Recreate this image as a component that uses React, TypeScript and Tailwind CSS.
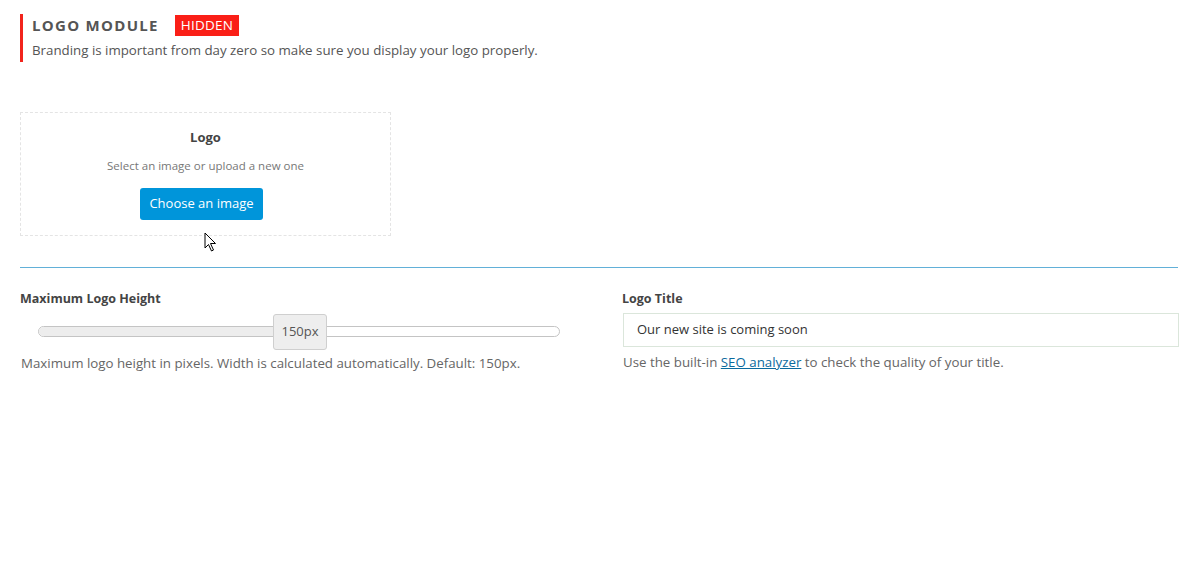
import React from "react";

const font = { fontFamily: '"Open Sans", "Noto Sans", Arial, sans-serif' };

const Cursor = () => (
  <svg width="14" height="22" viewBox="0 0 14 22" className="absolute left-[204px] top-[232px]">
    <path d="M1 1 L1 16 L4.5 12.5 L7.5 19 L9.5 18 L6.5 11.5 L11.5 11.5 Z" fill="#fff" stroke="#000" strokeWidth="1" strokeLinejoin="round" />
  </svg>
);

const App = () => {
  return (
    <div className="relative w-[1188px] h-[570px] bg-white text-[#555] overflow-hidden" style={font}>
      <div className="pl-5 pt-[14px]">
        <div className="border-l-[3px] border-[#f2241c] pl-[9px] h-[48px]">
          <div className="flex items-center gap-[16px] h-[22px]">
            <h2 className="text-[15px] font-bold tracking-[1.3px] text-[#555] leading-none">LOGO MODULE</h2>
            <span className="bg-[#fa1f17] text-white text-[13.5px] leading-[21px] px-[6px] tracking-[0.2px]">HIDDEN</span>
          </div>
          <p className="text-[13.3px] mt-[4px] text-[#555] leading-[20px]">
            Branding is important from day zero so make sure you display your logo properly.
          </p>
        </div>
      </div>

      <div className="ml-5 mt-[50px] w-[371px] h-[124px] border border-dashed border-[#e4e4e4] flex flex-col items-center pt-[15px]">
        <div className="text-[13px] font-bold text-[#444]">Logo</div>
        <div className="text-[11.5px] text-[#777] mt-[9px]">Select an image or upload a new one</div>
        <button className="mt-[14px] mr-[8px] w-[123px] h-[32px] bg-[#0095da] text-white text-[13px] rounded-[3px]">
          Choose an image
        </button>
      </div>
      <Cursor />

      <div className="ml-5 mr-[10px] mt-[31px] h-px bg-[#62b0d8]" />

      <div className="flex ml-5 mr-[9px] mt-[22px]">
        <div className="w-[540px] shrink-0">
          <div className="text-[12.5px] font-bold text-[#444]">Maximum Logo Height</div>
          <div className="relative mt-[5px] ml-[18px] h-[36px] flex items-center">
            <div className="w-full h-[11px] rounded-full border border-[#c4c4c4] bg-white overflow-hidden">
              <div className="w-[240px] h-full bg-[#ededed]" />
            </div>
            <div className="absolute left-[235px] top-0 w-[54px] h-[36px] rounded-[3px] border border-[#cfcfcf] bg-[#eeeeee] flex items-center justify-center text-[13px] text-[#555]">
              150px
            </div>
          </div>
          <p className="text-[13.3px] text-[#666] mt-[4px] ml-px">
            Maximum logo height in pixels. Width is calculated automatically. Default: 150px.
          </p>
        </div>
        <div className="ml-[62px] w-[557px] shrink-0">
          <div className="text-[12.5px] font-bold text-[#444]">Logo Title</div>
          <div className="mt-[4px] ml-px h-[34px] border border-[#dbe6db] flex items-center px-[13px] text-[13px] text-[#333]">
            Our new site is coming soon
          </div>
          <p className="text-[13.3px] text-[#666] mt-[6px] ml-px">
            Use the built-in{" "}
            <a href="#" className="text-[#0a6a9e] underline">SEO analyzer</a>{" "}
            to check the quality of your title.
          </p>
        </div>
      </div>
    </div>
  );
};

export default App;
